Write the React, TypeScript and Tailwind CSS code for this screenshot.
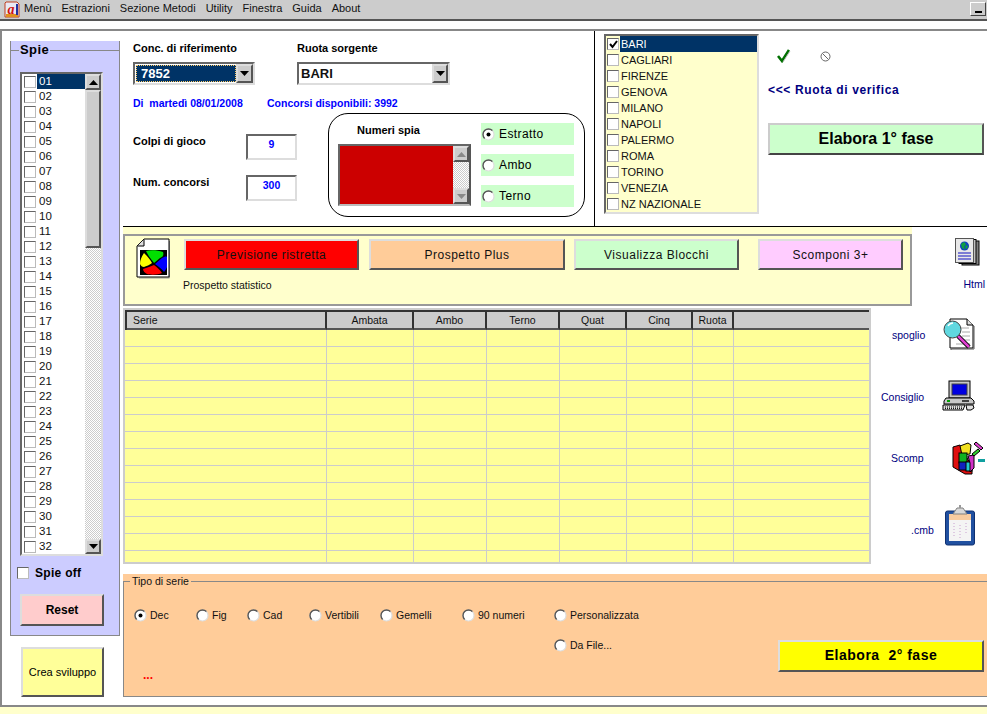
const sunken = 'border-2 border-t-[#666] border-l-[#666] border-r-[#ddd] border-b-[#ddd]'
const raised = 'border-2 border-t-[#ddd] border-l-[#ddd] border-r-[#555] border-b-[#555]'
const dither = '[background-image:conic-gradient(#ccc_25%,#fff_0_50%,#ccc_0_75%,#fff_0)] [background-size:2px_2px]'

const menuItems = ['Menù', 'Estrazioni', 'Sezione Metodi', 'Utility', 'Finestra', 'Guida', 'About']
const spie = Array.from({ length: 32 }, (_, i) => String(i + 1).padStart(2, '0'))
const ruote = ['BARI', 'CAGLIARI', 'FIRENZE', 'GENOVA', 'MILANO', 'NAPOLI', 'PALERMO', 'ROMA', 'TORINO', 'VENEZIA', 'NZ NAZIONALE']
const columns = [
  { label: 'Serie', width: 'w-[200px]', align: 'text-left pl-1.5' },
  { label: 'Ambata', width: 'w-[87px]', align: 'text-center' },
  { label: 'Ambo', width: 'w-[73px]', align: 'text-center' },
  { label: 'Terno', width: 'w-[73px]', align: 'text-center' },
  { label: 'Quat', width: 'w-[67px]', align: 'text-center' },
  { label: 'Cinq', width: 'w-[66px]', align: 'text-center' },
  { label: 'Ruota', width: 'w-[41px]', align: 'text-center' },
]
const rows = Array.from({ length: 14 }, (_, i) => i)

function Arrow({ up = false, muted = false }: { up?: boolean; muted?: boolean }) {
  return (
    <svg width="9" height="5" viewBox="0 0 9 5" className={up ? '' : 'rotate-180'}>
      <path d="M4.5 0L9 5H0z" fill={muted ? '#888' : '#000'} />
    </svg>
  )
}

function ScrollBtn({ up = false, muted = false, className = '' }: { up?: boolean; muted?: boolean; className?: string }) {
  return (
    <div className={`flex items-center justify-center bg-[#ccc] ${raised} ${className}`}>
      <Arrow up={up} muted={muted} />
    </div>
  )
}

function Check({ checked = false }: { checked?: boolean }) {
  return (
    <div className="flex size-[12px] shrink-0 items-center justify-center border border-t-[#666] border-l-[#666] border-r-[#bbb] border-b-[#bbb] bg-white">
      {checked && (
        <svg width="9" height="9" viewBox="0 0 9 9">
          <path d="M1 4l2.5 3L8 1" fill="none" stroke="#000" strokeWidth="2" />
        </svg>
      )}
    </div>
  )
}

function Radio({ on = false }: { on?: boolean }) {
  return (
    <svg width="13" height="13" viewBox="0 0 13 13" className="shrink-0">
      <circle cx="6.5" cy="6.5" r="5.5" fill="#fff" stroke="#ddd" strokeWidth="1.2" />
      <path d="M2.6 10.4A5.5 5.5 0 0 1 10.4 2.6" fill="none" stroke="#555" strokeWidth="1.4" />
      {on && <circle cx="6.5" cy="6.5" r="2" fill="#000" />}
    </svg>
  )
}

function AppLogo() {
  return (
    <svg width="16" height="17" viewBox="0 0 16 17">
      <path d="M2 1h11l2 2v13H1V2z" fill="#e8e8f4" stroke="#c04020" />
      <rect x="2" y="13" width="12" height="3" fill="#e09020" />
      <text x="3.5" y="12.5" fontFamily="Liberation Serif" fontStyle="italic" fontWeight="700" fontSize="14" fill="#d01010">a</text>
      <rect x="12" y="3" width="2" height="11" fill="#2030a0" />
    </svg>
  )
}

function ProspettoIcon() {
  return (
    <svg width="34" height="41" viewBox="0 0 34 41" className="shrink-0">
      <path d="M33.500 3v37H3" fill="none" stroke="#999" />
      <path d="M8 1h25v38H1V8z" fill="#fff" stroke="#000" />
      <path d="M1.500 8h6.500V1.500" fill="#ddd" stroke="#000" />
      <rect x="4" y="12" width="27" height="25" fill="#000" />
      <path d="M10 13c5-1 11-1 17 1 1 3 0 5-3 6l-6 5c-1-2-4-4-8-12z" fill="#00e000" />
      <path d="M8 15c3 3 6 6 8 10-2 2-6 3-8 4-2 0-3-1-4-3 0-4 2-8 4-11z" fill="#ffff00" />
      <path d="M19 26l7-6c2-1 4-2 5-1v10c-1 2-2 4-3 5-2-3-6-6-9-8z" fill="#0000ff" />
      <path d="M7 31c4-1 8-3 11-4 3 2 6 5 8 8-4 2-12 2-15 1-2-1-4-3-4-5z" fill="#ff0000" />
    </svg>
  )
}

function HtmlIcon() {
  return (
    <svg width="25" height="28" viewBox="0 0 25 28">
      <rect x="7" y="3" width="17" height="24" fill="#808080" stroke="#000" />
      <rect x="4" y="1.500" width="17" height="24" fill="#c0c0c0" stroke="#000" />
      <rect x="0.500" y="0.500" width="18" height="24" fill="#e8e8e8" stroke="#555" />
      <circle cx="9.500" cy="8" r="4.500" fill="#1040c0" />
      <path d="M6 6l3-2 2 2-2 3 1 3-3-2zM11 7l2 1-1 3-2-1z" fill="#10a040" />
      <path d="M3 15h13M3 18h13M3 21h13" stroke="#1010c0" />
    </svg>
  )
}

function SpoglioIcon() {
  return (
    <svg width="32" height="33" viewBox="0 0 32 33">
      <path d="M7 1h17l6 6v23H7z" fill="#fff" stroke="#000" />
      <path d="M30 8h1v23H8v1" fill="none" stroke="#555" />
      <path d="M24 1v6h6" fill="#ddd" stroke="#000" />
      <path d="M14 10h12M19 14h8M19 18h8M19 22h8M13 26h14" stroke="#aaa" />
      <path d="M15 18l11 11" stroke="#000" strokeWidth="4.500" />
      <path d="M15 18l11 11" stroke="#e040d0" strokeWidth="2.500" />
      <circle cx="9.500" cy="11.500" r="8.500" fill="#60d8e0" stroke="#404040" />
      <path d="M5 8a6 6 0 0 1 5-3" stroke="#fff" strokeWidth="1.500" fill="none" />
    </svg>
  )
}

function ConsiglioIcon() {
  return (
    <svg width="33" height="31" viewBox="0 0 33 31">
      <rect x="7" y="1" width="21" height="17" fill="#c8c8c8" stroke="#000" />
      <rect x="10" y="4" width="15" height="11" fill="#0000e0" stroke="#404040" />
      <path d="M4 18h25l3 3v3H2v-3z" fill="#c8c8c8" stroke="#000" />
      <rect x="5" y="20" width="3" height="2" fill="#00a000" />
      <rect x="20" y="20" width="7" height="2" fill="#404040" />
      <path d="M1 25h22l-2 5H1z" fill="#e0e0e0" stroke="#000" />
      <path d="M3 27h17M3 28.600h17" stroke="#000" strokeDasharray="1 1" />
      <path d="M24 25h7l1 3-3 2h-4z" fill="#e0e0e0" stroke="#000" />
    </svg>
  )
}

function ScompIcon() {
  return (
    <svg width="34" height="34" viewBox="0 0 34 34">
      <path d="M1 6l7-2 12 22v7H13L1 26z" fill="#e01010" stroke="#000" />
      <path d="M8 5l8-3 3 2-1 9-8 1z" fill="#f0e020" stroke="#000" />
      <rect x="7" y="12" width="8" height="10" fill="#10b020" stroke="#000" />
      <rect x="7" y="21" width="8" height="8" fill="#1020c0" stroke="#000" />
      <rect x="14" y="21" width="6" height="9" fill="#20c8d0" stroke="#000" />
      <path d="M16 15l6-1v13l-4 4v-9z" fill="#d030c8" stroke="#000" />
      <path d="M24 1l7 6-2 2-7-6z" fill="#e040d0" stroke="#000" />
      <path d="M20 13l6-5 2 2-6 5z" fill="#30d030" stroke="#000" />
      <rect x="26" y="18" width="7" height="3" fill="#10a0a0" />
    </svg>
  )
}

function ClipboardIcon() {
  return (
    <svg width="30" height="41" viewBox="0 0 30 41">
      <rect x="0.500" y="6" width="29" height="34" rx="2" fill="#2050a0" stroke="#103070" />
      <rect x="4" y="9" width="22" height="27" fill="#f4f4f4" />
      <rect x="4" y="9" width="22" height="6" fill="#f8cca0" />
      <path d="M9 18v15M15 20v13M21 18v12" stroke="#c8a0d0" strokeDasharray="1 2" />
      <path d="M10 6l2-3h6l2 3 2 3H8z" fill="#d8d8d8" stroke="#808080" />
      <rect x="14" y="0" width="2" height="3" fill="#999" />
    </svg>
  )
}

function SideLink({ label, icon, className, labelClass }: { label: string; icon: React.ReactNode; className: string; labelClass: string }) {
  return (
    <div className={`flex items-center text-[10.5px] text-[#000080] ${className}`}>
      <span className={labelClass}>{label}</span>
      {icon}
    </div>
  )
}

export default function App() {
  return (
    <div className="flex h-[714px] w-[987px] flex-col overflow-hidden bg-white text-[11px] text-black [font-family:'Liberation_Sans',Arial,sans-serif]">
      {/* Menu bar */}
      <div className="flex h-[21px] shrink-0 items-center border-b-2 border-[#555] bg-[#ccc] pb-[2px]">
        <div className="ml-1 mr-[4px] mt-[1px] flex"><AppLogo /></div>
        <nav className="flex gap-[10px] text-[11px] text-[#111]">
          {menuItems.map((m) => <span key={m}>{m}</span>)}
        </nav>
        <div className="ml-auto mr-[1px] flex h-[14px] w-[16px] items-end justify-center border border-t-white border-l-white border-r-[#444] border-b-[#444] bg-[#ccc] pb-[2px]">
          <div className="h-[2px] w-[7px] bg-black" />
        </div>
      </div>
      <div className="h-[8px] shrink-0" />

      {/* Main window */}
      <div className="flex h-[678px] shrink-0 border-y-2 border-t-[#888] border-b-[#888] border-l-2 border-l-[#888]">
        {/* Spie column */}
        <div className="flex w-[121px] shrink-0 flex-col pl-[8px] pt-[10px]">
          <div className="relative h-[595px] w-[110px] border-r border-b border-l border-[#888] bg-[#ccf]">
            <div className="absolute left-0 right-0 top-[9px] border-t border-[#888]" />
            <div className="relative flex flex-col pl-[9px] pt-[1px]">
              <div className="-ml-[1px] w-fit bg-[#ccf] px-[1px] text-[13px] leading-[15px] font-bold tracking-[0.4px]">Spie</div>
              <div className={`mt-[15px] flex h-[484px] w-[83px] bg-white ${sunken}`}>
                <div className="flex flex-1 flex-col pl-[2px]">
                  {spie.map((n, i) => (
                    <div key={n} className="flex h-[15px] shrink-0 items-center gap-[1px]">
                      <Check />
                      <span className={`flex-1 pl-[2px] text-[11.5px] leading-[15px] ${i === 0 ? 'bg-[#036] text-white' : 'text-[#111]'}`}>{n}</span>
                    </div>
                  ))}
                </div>
                <div className={`flex w-[16px] shrink-0 flex-col ${dither}`}>
                  <ScrollBtn up className="h-[16px]" />
                  <div className={`h-[158px] bg-[#ccc] ${raised}`} />
                  <div className="flex-1" />
                  <ScrollBtn className="h-[15px]" />
                </div>
              </div>
              <div className="-ml-[3px] mt-[8px] flex items-center gap-[6px]">
                <Check />
                <span className="text-[12px] font-bold tracking-[0.3px]">Spie off</span>
              </div>
              <button className={`mt-[12px] h-[32px] w-[84px] bg-[#fcc] text-[12px] font-bold ${raised}`}>Reset</button>
            </div>
          </div>
          <button className={`ml-[11px] mt-[11px] h-[50px] w-[83px] bg-[#ff9] text-[11px] ${raised}`}>Crea sviluppo</button>
        </div>

        {/* Right side */}
        <div className="flex min-w-0 flex-1 flex-col">
          {/* Top row */}
          <div className="flex h-[196px] shrink-0 border-b border-black">
            <div className="flex w-[472px] shrink-0 flex-col border-r border-black pl-[10px]">
              <div className="flex pt-[11px] font-bold leading-[13px]">
                <span className="w-[164px]">Conc. di riferimento</span>
                <span>Ruota sorgente</span>
              </div>
              <div className="mt-[7px] flex">
                <div className={`flex h-[23px] w-[122px] items-center justify-between bg-white ${sunken}`}>
                  <span className="ml-[1px] flex h-[17px] flex-1 items-center bg-[#036] pl-[5px] text-[13px] font-bold text-white outline-1 -outline-offset-1 outline-dotted outline-[#ffcc66]">7852</span>
                  <ScrollBtn className="h-[19px] w-[17px]" />
                </div>
                <div className={`ml-[42px] flex h-[23px] w-[153px] items-center justify-between bg-white ${sunken}`}>
                  <span className="pl-[2px] text-[13px] font-bold text-[#111]">BARI</span>
                  <ScrollBtn className="h-[19px] w-[16px]" />
                </div>
              </div>
              <div className="mt-[12px] flex text-[10.5px] leading-[12px] font-bold text-[#0000ff]">
                <span className="w-[134px] whitespace-pre">Di  martedì 08/01/2008</span>
                <span>Concorsi disponibili: 3992</span>
              </div>
              <div className="flex">
                <div className="flex w-[195px] flex-col pt-[25px]">
                  <div className="flex h-[26px] items-start justify-between pr-[31px]">
                    <span className="pt-[1px] font-bold leading-[12px]">Colpi di gioco</span>
                    <div className={`flex h-[26px] w-[51px] justify-center bg-white pt-[1px] text-[10.5px] font-bold text-[#0000ff] ${sunken}`}>9</div>
                  </div>
                  <div className="mt-[15px] flex h-[26px] items-start justify-between pr-[31px]">
                    <span className="pt-[1px] font-bold leading-[12px]">Num. concorsi</span>
                    <div className={`flex h-[26px] w-[51px] justify-center bg-white pt-[1px] text-[10.5px] font-bold text-[#0000ff] ${sunken}`}>300</div>
                  </div>
                </div>
                <div className="mt-[4px] flex h-[104px] w-[257px] rounded-[20px] border border-black pl-[9px] pt-[9px]">
                  <div className="flex w-[143px] shrink-0 flex-col">
                    <span className="pl-[19px] pt-[1px] font-bold leading-[13px]">Numeri spia</span>
                    <div className="mt-[7px] flex h-[62px] w-[133px] border-2 border-t-[#666] border-l-[#666] border-r-[#555] border-b-[#bbb] bg-[#c00]">
                      <div className="flex-1" />
                      <div className={`flex w-[16px] shrink-0 flex-col justify-between ${dither}`}>
                        <ScrollBtn up muted className="h-[16px]" />
                        <ScrollBtn muted className="h-[16px]" />
                      </div>
                    </div>
                  </div>
                  <div className="flex flex-col gap-[9px]">
                    {['Estratto', 'Ambo', 'Terno'].map((r, i) => (
                      <div key={r} className="flex h-[22px] w-[93px] items-center gap-[4px] bg-[#cfc] pl-[1px] text-[12px] tracking-[0.4px]">
                        <Radio on={i === 0} />
                        <span>{r}</span>
                      </div>
                    ))}
                  </div>
                </div>
              </div>
            </div>
            <div className="flex flex-1 pl-[9px] pt-[3px]">
              <div className={`flex h-[180px] w-[155px] shrink-0 flex-col bg-[#ffc] pl-[1px] ${sunken}`}>
                {ruote.map((r, i) => (
                  <div key={r} className="flex h-[16px] items-center gap-[1px] text-[11px]">
                    <Check checked={i === 0} />
                    <span className={`flex-1 pl-[1px] leading-[16px] ${i === 0 ? 'bg-[#036] text-white' : 'text-[#111]'}`}>{r}</span>
                  </div>
                ))}
              </div>
              <div className="flex flex-1 flex-col pl-[9px]">
                <div className="flex h-[44px] items-center pl-[9px]">
                  <svg width="14" height="14" viewBox="0 0 14 14">
                    <path d="M1 7l4 5 7-11" fill="none" stroke="#007000" strokeWidth="2.600" />
                    <path d="M13 2L6 13" stroke="#bbb" />
                  </svg>
                  <svg className="ml-[29px]" width="11" height="11" viewBox="0 0 11 11">
                    <circle cx="5.500" cy="5.500" r="4.500" fill="none" stroke="#666" />
                    <path d="M2.500 2.500l6 6" stroke="#666" />
                  </svg>
                </div>
                <span className="mt-[5px] text-[12px] font-bold leading-[14px] tracking-[0.65px] text-[#000080]">&lt;&lt;&lt; Ruota di verifica</span>
                <button className="mt-[26px] h-[32px] w-[216px] border-2 border-t-[#ccc] border-l-[#ccc] border-r-[#555] border-b-[#444] bg-[#cfc] text-[16px] font-bold">Elabora 1° fase</button>
              </div>
            </div>
          </div>

          {/* Button strip */}
          <div className="flex shrink-0">
            <div className="w-[789px] shrink-0 bg-[#ffc] pt-[7px]">
              <div className="flex h-[72px] flex-col border-2 border-[#999] pl-[11px] pt-[2px]">
                <div className="flex">
                  <ProspettoIcon />
                  <div className="ml-[14px] flex flex-col">
                    <div className="mt-[1px] flex gap-[10px] text-[12px] tracking-[0.5px] text-[#111]">
                      <button className={`h-[31px] w-[175px] bg-[#f00] ${raised}`}>Previsione ristretta</button>
                      <button className={`h-[31px] w-[196px] bg-[#fc9] ${raised}`}>Prospetto Plus</button>
                      <button className={`-ml-[1px] h-[31px] w-[165px] bg-[#cfc] ${raised}`}>Visualizza Blocchi</button>
                      <button className={`ml-[9px] h-[31px] w-[145px] bg-[#fcf] ${raised}`}>Scomponi 3+</button>
                    </div>
                    <span className="-ml-[1px] mt-[9px] text-[10.5px] leading-[12px] text-[#111]">Prospetto statistico</span>
                  </div>
                </div>
              </div>
            </div>
            <div className="flex flex-1 flex-col items-end pr-[2px] pt-[11px] text-[10.5px] text-[#000080]">
              <div className="mr-[5px] flex"><HtmlIcon /></div>
              <span className="mt-[12px] leading-[12px]">Html</span>
            </div>
          </div>

          {/* Grid + side links */}
          <div className="flex shrink-0 pt-[2px]">
            <div className="h-[256px] w-[748px] shrink-0 overflow-hidden border-2 border-[#ccc] bg-[#ff9]">
              <div className="flex h-[20px] border-t-2 border-l-2 border-[#333] bg-[#ccc] text-[10.5px] text-[#111]">
                {columns.map((c) => (
                  <div key={c.label} className={`${c.width} shrink-0 border-r-2 border-b-2 border-r-[#333] border-b-[#555] leading-[16px] ${c.align}`}>{c.label}</div>
                ))}
                <div className="flex-1 border-b-2 border-[#555]" />
              </div>
              {rows.map((r) => (
                <div key={r} className="flex h-[17px] border-b border-[#ccc] pl-[2px]">
                  {columns.map((c) => <div key={c.label} className={`${c.width} shrink-0 border-r border-[#ccc]`} />)}
                </div>
              ))}
            </div>
            <div className="flex flex-1 flex-col">
              <SideLink label="spoglio" labelClass="pt-[2px]" icon={<div className="ml-[18px]"><SpoglioIcon /></div>} className="mt-[10px] pl-[21px]" />
              <SideLink label="Consiglio" labelClass="pt-[4px]" icon={<div className="ml-[18px]"><ConsiglioIcon /></div>} className="mt-[29px] pl-[10px]" />
              <SideLink label="Scomp" labelClass="pt-[2px]" icon={<div className="ml-[28px]"><ScompIcon /></div>} className="mt-[30px] pl-[20px]" />
              <SideLink label=".cmb" labelClass="pt-[10px]" icon={<div className="ml-[11px]"><ClipboardIcon /></div>} className="mt-[30px] pl-[40px]" />
            </div>
          </div>

          {/* Tipo di serie */}
          <div className="relative mt-[10px] h-[123px] shrink-0 bg-[#fc9]">
            <div className="absolute inset-x-0 bottom-0 top-[7px] border-t border-b border-l border-[#888]" />
            <span className="relative -top-[1px] ml-[7px] bg-[#fc9] px-[2px] text-[10.5px] leading-[13px] text-[#111]">Tipo di serie</span>
            <div className="relative flex flex-col pl-[11px] pt-[18px] text-[10.5px] text-[#111]">
              <div className="flex h-[14px]">
                <label className="flex w-[62px] items-center gap-[3px]"><Radio on /><span>Dec</span></label>
                <label className="flex w-[51px] items-center gap-[3px]"><Radio /><span>Fig</span></label>
                <label className="flex w-[62px] items-center gap-[3px]"><Radio /><span>Cad</span></label>
                <label className="flex w-[71px] items-center gap-[3px]"><Radio /><span>Vertibili</span></label>
                <label className="flex w-[82px] items-center gap-[3px]"><Radio /><span>Gemelli</span></label>
                <label className="flex w-[92px] items-center gap-[3px]"><Radio /><span>90 numeri</span></label>
                <label className="flex items-center gap-[3px]"><Radio /><span>Personalizzata</span></label>
              </div>
              <div className="mt-[16px] flex h-[14px] pl-[420px]">
                <label className="flex items-center gap-[3px]"><Radio /><span>Da File...</span></label>
              </div>
              <div className="flex items-start justify-between">
                <span className="pl-[9px] pt-[15px] text-[12px] font-bold leading-[14px] text-[#f00]">...</span>
                <button className={`mr-[3px] -mt-[13px] h-[32px] w-[206px] bg-[#ff0] text-[14px] font-bold tracking-[0.5px] text-black ${raised}`}>Elabora&nbsp; 2° fase</button>
              </div>
            </div>
          </div>
        </div>
      </div>
      <div className="flex-1 bg-[#ffc]" />
    </div>
  )
}
